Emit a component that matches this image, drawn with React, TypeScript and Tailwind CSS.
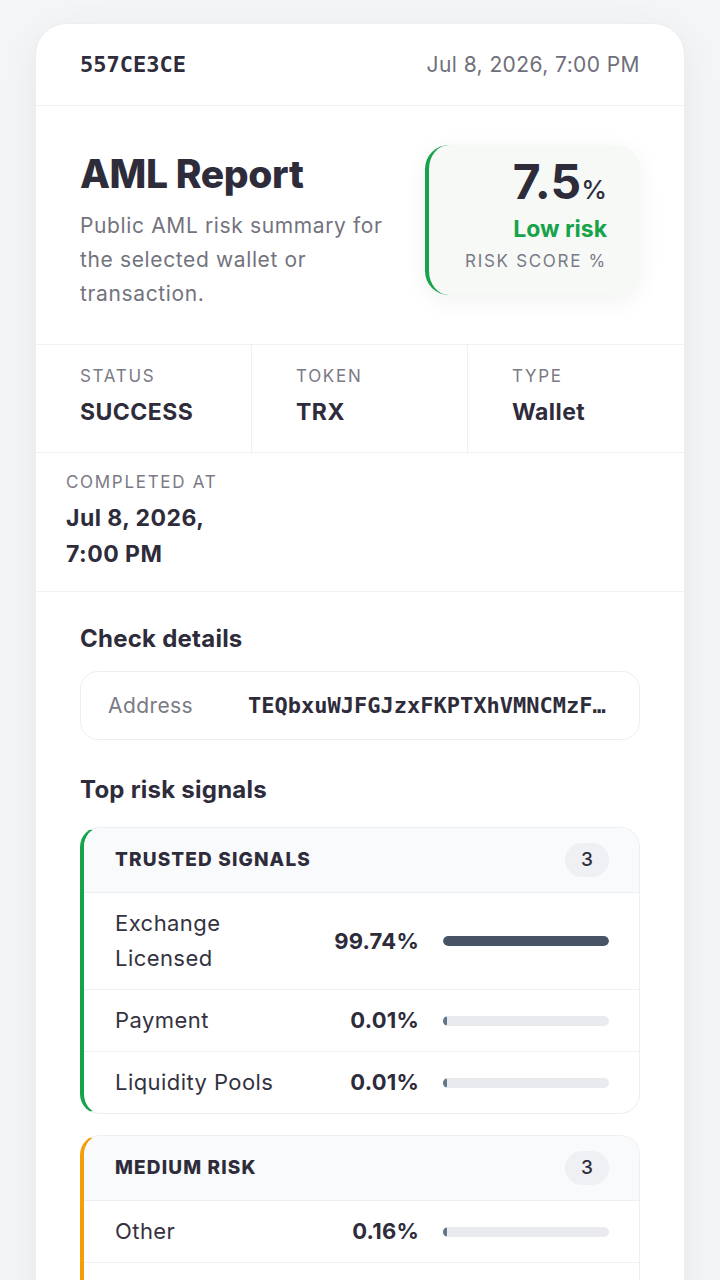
const sans = { fontFamily: "Inter, 'Noto Sans', sans-serif" };
const mono = { fontFamily: "'DejaVu Sans Mono', 'Liberation Mono', monospace" };

type Signal = { label: string; value: number };

const trusted: Signal[] = [
  { label: "Exchange Licensed", value: 99.74 },
  { label: "Payment", value: 0.01 },
  { label: "Liquidity Pools", value: 0.01 },
];

const medium: Signal[] = [
  { label: "Other", value: 0.16 },
  { label: "Unnamed Service", value: 0.05 },
  { label: "Token Smart Contract", value: 0.03 },
];

function SignalCard({ title, accent, rows }: { title: string; accent: string; rows: Signal[] }) {
  return (
    <div className={`rounded-[20px] border border-[#eceef1] border-l-4 ${accent} bg-white overflow-hidden`}>
      <div className="flex items-center justify-between h-[65px] pl-[31px] pr-[30px] bg-[#f9fafb] border-b border-[#eceef1]">
        <span className="text-[19px] font-extrabold tracking-[0.06em] uppercase text-[#2e2c3b]">{title}</span>
        <span className="w-[44px] h-[34px] rounded-full bg-[#eef0f3] flex items-center justify-center text-[19px] font-medium text-[#2e2c3b]">
          {rows.length}
        </span>
      </div>
      {rows.map((r, i) => (
        <div
          key={r.label}
          className={`grid grid-cols-[1fr_100px_166px] gap-x-6 items-center pl-[31px] pr-[30px] py-[13px] ${
            i < rows.length - 1 ? "border-b border-[#eef0f2]" : ""
          }`}
        >
          <span className="text-[22px] leading-[35px] tracking-[0.02em] text-[#34323f]">{r.label}</span>
          <span className="text-[22px] leading-[35px] font-bold tracking-[0.01em] text-right text-[#2e2c3b]">
            {r.value.toFixed(2)}%
          </span>
          <div className="h-[10px] rounded-full bg-[#e8eaee] overflow-hidden">
            <div
              className={`h-full rounded-full ${r.value > 50 ? "bg-[#475466]" : "bg-[#64748b]"}`}
              style={{ width: `max(4px, ${r.value}%)` }}
            />
          </div>
        </div>
      ))}
    </div>
  );
}

export default function App() {
  return (
    <div className="min-h-[1280px] bg-[#f4f5f7] pt-[23px] pb-10" style={sans}>
      <div className="mx-[35px] w-[650px] rounded-[32px] bg-white border border-[#eceef1] shadow-[0_10px_40px_rgba(15,23,42,0.06)] overflow-hidden">
        {/* header */}
        <div className="flex items-center justify-between h-[82px] px-[44px] border-b border-[#eef0f2]">
          <span className="text-[22px] font-bold text-[#2e2c3b]" style={mono}>557CE3CE</span>
          <span className="text-[21px] tracking-[0.02em] text-[#6f6f7a]">Jul 8, 2026, 7:00 PM</span>
        </div>

        {/* hero */}
        <div className="flex items-start justify-between gap-[20px] pl-[44px] pr-[44px] pt-[39px] pb-[33px] border-b border-[#eef0f2]">
          <div className="flex-1 pt-[6px]">
            <h1 className="text-[39px] leading-[46px] font-extrabold tracking-[-0.01em] text-[#2e2c3b]">AML Report</h1>
            <p className="mt-[12px] text-[21px] leading-[34px] text-[#73737e] tracking-[0.03em]">
              Public AML risk summary for the selected wallet or transaction.
            </p>
          </div>
          <div className="w-[215px] h-[150px] shrink-0 rounded-[24px] border-l-4 border-[#16a34a] bg-[#f7f9f7] shadow-[0_6px_24px_rgba(15,23,42,0.06)] flex flex-col items-end pt-[14px] pr-[33px]">
            <div className="flex items-baseline text-[#2e2c3b]">
              <span className="text-[48px] leading-[46px] font-bold">7.5</span>
              <span className="text-[26px] font-medium">%</span>
            </div>
            <div className="mt-[5px] text-[23px] leading-[30px] font-bold text-[#16a34a]">Low risk</div>
            <div className="mt-[5px] text-[17px] leading-[24px] tracking-[0.1em] text-[#7a7a85]">RISK SCORE %</div>
          </div>
        </div>

        {/* stats */}
        <div className="grid grid-cols-3 border-b border-[#eef0f2]">
          {[
            ["STATUS", "SUCCESS"],
            ["TOKEN", "TRX"],
            ["TYPE", "Wallet"],
          ].map(([k, v], i) => (
            <div key={k} className={`pl-[44px] pt-[19px] pb-[24px] ${i < 2 ? "border-r border-[#eef0f2]" : ""}`}>
              <div className="text-[17px] leading-[24px] tracking-[0.1em] text-[#7a7a85]">{k}</div>
              <div className="mt-[8px] text-[23px] leading-[32px] font-bold tracking-[0.02em] text-[#2e2c3b]">{v}</div>
            </div>
          ))}
        </div>
        <div className="border-b border-[#eef0f2]">
          <div className="w-[217px] px-[30px] pt-[17px] pb-[19px]">
            <div className="text-[17px] leading-[24px] tracking-[0.1em] text-[#7a7a85]">COMPLETED AT</div>
            <div className="mt-[6px] text-[23px] leading-[36px] font-bold tracking-[0.02em] text-[#2e2c3b]">
              Jul 8, 2026, 7:00 PM
            </div>
          </div>
        </div>

        {/* details */}
        <div className="px-[44px] pt-[32px] pb-10">
          <h2 className="text-[24px] leading-[30px] font-bold tracking-[0.01em] text-[#2e2c3b]">Check details</h2>
          <div className="mt-[17px] h-[69px] rounded-[18px] border border-[#eceef1] flex items-center px-[27px]">
            <span className="w-[140px] shrink-0 text-[21px] tracking-[0.02em] text-[#7a7a85]">Address</span>
            <span className="min-w-0 flex-1 truncate text-[22px] font-bold text-[#2e2c3b]" style={mono}>
              TEQbxuWJFGJzxFKPTXhVMNCMzFq7Lp2dXa
            </span>
          </div>

          <h2 className="mt-[35px] text-[24px] leading-[30px] font-bold tracking-[0.01em] text-[#2e2c3b]">Top risk signals</h2>
          <div className="mt-[22px] flex flex-col gap-[21px]">
            <SignalCard title="Trusted signals" accent="border-l-[#16a34a]" rows={trusted} />
            <SignalCard title="Medium risk" accent="border-l-[#f59e0b]" rows={medium} />
          </div>
        </div>
      </div>
    </div>
  );
}
